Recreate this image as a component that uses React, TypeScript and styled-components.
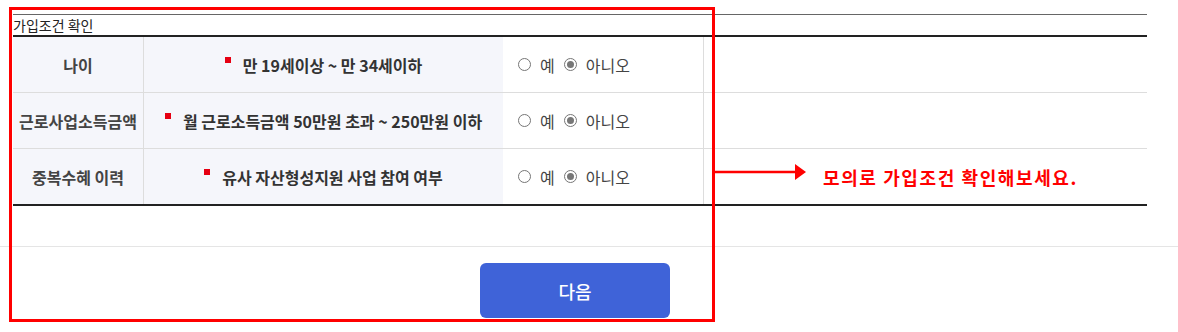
import styled, { createGlobalStyle } from "styled-components";

const GlobalStyle = createGlobalStyle`
  html, body {
    margin: 0;
    padding: 0;
    background: #fff;
  }
  body {
    font-family: "Noto Sans CJK KR", "Noto Sans", sans-serif;
    color: #444;
  }
`;

const Page = styled.div`
  position: relative;
  width: 1178px;
  height: 332px;
  overflow: hidden;
`;

const Section = styled.section`
  margin-left: 13px;
  width: 1134px;
  padding-top: 14px;
`;

const Heading = styled.h3`
  margin: 0;
  border-top: 1px solid #666;
  border-bottom: 2px solid #222;
  font-size: 14px;
  font-weight: 400;
  line-height: 20px;
  height: 20px;
  color: #222;
`;

const Table = styled.div`
  border-bottom: 2px solid #222;
`;

const Row = styled.div<{ $last?: boolean }>`
  display: grid;
  grid-template-columns: 131px 359px 201px 1fr;
  height: ${(p) => (p.$last ? 55 : 56)}px;
  border-bottom: ${(p) => (p.$last ? "none" : "1px solid #ddd")};
  box-sizing: border-box;
`;

const Label = styled.div`
  display: flex;
  align-items: center;
  justify-content: center;
  background: #f5f6fb;
  border-right: 1px solid #ddd;
  font-size: 16px;
  font-weight: 700;
  color: #444;
`;

const Condition = styled.div`
  display: flex;
  align-items: center;
  justify-content: center;
  background: #f5f6fb;
  font-size: 16px;
  font-weight: 700;
  color: #333;
`;

const Marker = styled.span`
  width: 6px;
  height: 6px;
  background: #e60012;
  margin-right: 12px;
  align-self: center;
  transform: translateY(-5px);
`;

const Choices = styled.div`
  display: flex;
  align-items: center;
  padding-left: 15px;
  border-right: 1px solid #ddd;
  font-size: 16px;
  color: #444;
`;

const Radio = styled.span<{ $checked?: boolean }>`
  box-sizing: border-box;
  width: 13px;
  height: 13px;
  border-radius: 50%;
  border: 1px solid #767676;
  display: inline-flex;
  align-items: center;
  justify-content: center;
  margin-right: 9px;
  &::after {
    content: "";
    width: 7px;
    height: 7px;
    border-radius: 50%;
    background: ${(p) => (p.$checked ? "#777" : "transparent")};
  }
`;

const ChoiceText = styled.span`
  margin-right: 9px;
  line-height: 1;
`;

const Extra = styled.div`
  display: flex;
  align-items: center;
  padding-left: 8px;
`;

const ArrowIcon = styled.svg`
  transform: translateY(-5px);
`;

const Message = styled.span`
  margin-left: 17px;
  color: #ff0000;
  font-size: 18px;
  font-weight: 700;
  letter-spacing: 1.6px;
`;

const Footer = styled.div`
  margin-top: 40px;
  border-top: 1px solid #e5e5e5;
  padding-top: 16px;
`;

const NextButton = styled.button`
  margin-left: 480px;
  width: 190px;
  height: 55px;
  border: none;
  border-radius: 6px;
  background: #3f63d8;
  color: #fff;
  font-family: inherit;
  font-size: 18px;
  font-weight: 500;
`;

const Highlight = styled.div`
  position: absolute;
  left: 9px;
  top: 7px;
  width: 706px;
  height: 315px;
  box-sizing: border-box;
  border: 3px solid #ff0000;
  pointer-events: none;
`;

const rows = [
  { label: "나이", condition: "만 19세이상 ~ 만 34세이하" },
  { label: "근로사업소득금액", condition: "월 근로소득금액 50만원 초과 ~ 250만원 이하" },
  { label: "중복수혜 이력", condition: "유사 자산형성지원 사업 참여 여부" },
];

function Arrow() {
  return (
    <ArrowIcon width="94" height="20" viewBox="0 0 94 20">
      <line x1="0" y1="10" x2="84" y2="10" stroke="#ff0000" strokeWidth="2.5" />
      <polygon points="83,2 94,10 83,18" fill="#ff0000" />
    </ArrowIcon>
  );
}

export default function App() {
  return (
    <Page>
      <GlobalStyle />
      <Section>
        <Heading>가입조건 확인</Heading>
        <Table>
          {rows.map((r, i) => (
            <Row key={r.label} $last={i === rows.length - 1}>
              <Label>{r.label}</Label>
              <Condition>
                <Marker />
                {r.condition}
              </Condition>
              <Choices>
                <Radio />
                <ChoiceText>예</ChoiceText>
                <Radio $checked />
                <ChoiceText>아니오</ChoiceText>
              </Choices>
              <Extra>
                {i === rows.length - 1 && (
                  <>
                    <Arrow />
                    <Message>모의로 가입조건 확인해보세요.</Message>
                  </>
                )}
              </Extra>
            </Row>
          ))}
        </Table>
      </Section>
      <Footer>
        <NextButton>다음</NextButton>
      </Footer>
      <Highlight />
    </Page>
  );
}
